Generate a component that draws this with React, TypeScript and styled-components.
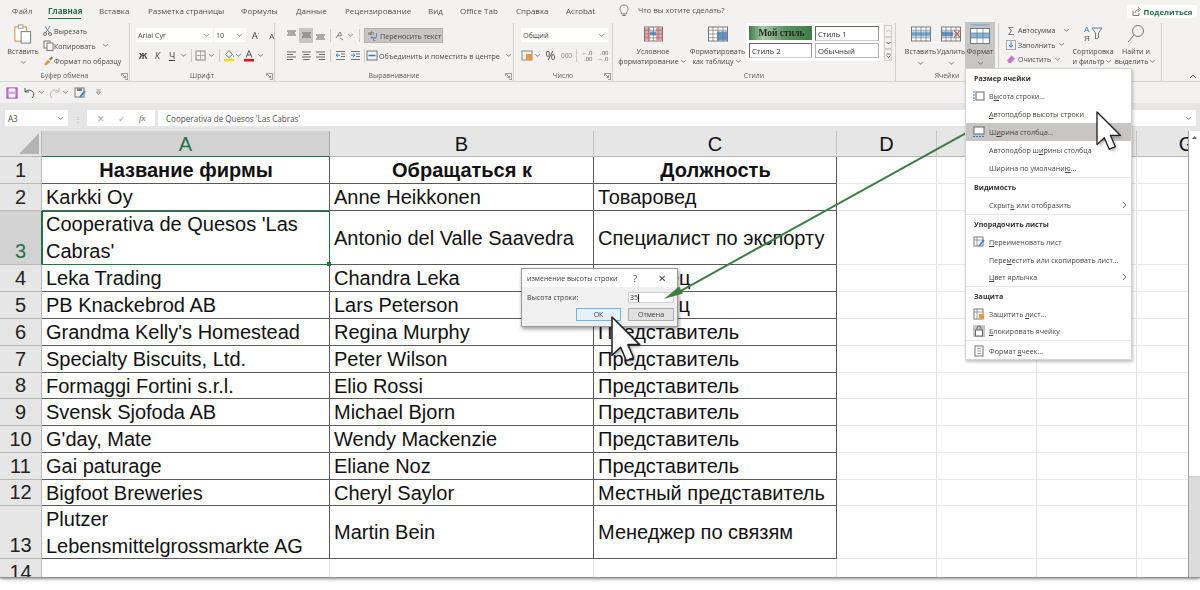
import React from "react";
import styled, { createGlobalStyle } from "styled-components";

const Global = createGlobalStyle`
  html, body { margin: 0; padding: 0; background: #fff; }
  #root { width: 1200px; height: 590px; overflow: hidden; }
`;

const UI = `"Open Sans", "Noto Sans", sans-serif`;
const Page = styled.div`position: relative; width: 1200px; height: 590px; background: #fff; overflow: hidden; font-family: ${UI};`;
const Shell = styled.div`display: flex; flex-direction: column; height: 578px; padding-top: 2px; box-sizing: border-box; background: #f3f2f1; border-bottom: 1px solid #8f8f8f; box-shadow: 0 1px 3px rgba(0,0,0,.45); overflow: hidden;`;
const Soft = styled.div`filter: blur(0.3px); display: flex; flex-direction: column;`;

const TabBar = styled.div`display: flex; align-items: center; height: 18px; padding: 0 0 2px 12px; box-sizing: border-box; position: relative;`;
const Tab = styled.div<{ $w: number; $active?: boolean }>`
  width: ${p => p.$w}px; flex: none; font-size: 8px; white-space: nowrap; color: ${p => p.$active ? "#2b6a44" : "#505050"}; font-weight: ${p => p.$active ? 700 : 400}; position: relative;
  ${p => p.$active ? `&::after{content:"";position:absolute;left:0;top:13px;width:33px;height:1.5px;background:#217346;}` : ""}
`;
const Hint = styled.div`margin-left: 9px; font-size: 7.6px; color: #505050; white-space: nowrap;`;
const Share = styled.div`position: absolute; left: 1127px; top: 3px; width: 70px; height: 13px; background: #fff; border-radius: 2px; display: flex; align-items: center; justify-content: center; gap: 3px; font-size: 7.8px; font-weight: 700; color: #217346;`;

const Ribbon = styled.div`display: flex; height: 62px; padding-top: 3px; box-sizing: border-box; border-bottom: 1px solid #d4d4d4; position: relative;`;
const Group = styled.div<{ $w: number }>`position: relative; width: ${p => p.$w}px; flex: none; height: 58px; box-sizing: border-box; border-right: 1px solid #d2d0ce; display: flex; flex-direction: column;`;
const GroupBody = styled.div<{ $pl?: number; $gap?: number }>`flex: 1; display: flex; padding-left: ${p => p.$pl ?? 0}px; gap: ${p => p.$gap ?? 0}px; min-height: 0;`;
const GroupLabel = styled.div`height: 10px; line-height: 10px; font-size: 6.9px; color: #5c5c5c; text-align: center;`;
const Launcher = styled.svg`position: absolute; right: 1px; bottom: 1px; width: 7px; height: 7px;`;
const Collapse = styled.svg`position: absolute; left: 1189px; top: 54px; width: 8px; height: 5px;`;
const BigBtn = styled.div<{ $w: number; $on?: boolean; $pl?: number }>`
  width: ${p => p.$w}px; flex: none; box-sizing: border-box; padding-left: ${p => p.$pl ?? 0}px; height: 46px; margin-top: ${p => p.$on ? -1 : 0}px; position: relative; z-index: 1; display: flex; flex-direction: column; align-items: center; font-size: 7.1px; line-height: 10px; color: #484848; white-space: nowrap;
  background: ${p => p.$on ? "#c8c6c4" : "transparent"};
  svg.main { margin-top: ${p => p.$on ? 2 : 1}px; margin-bottom: 2px; height: 20px; }
`;
const Caret = styled.span`display: inline-block; width: 4px; height: 4px; border-right: 1px solid #777; border-bottom: 1px solid #777; transform: scale(.75,.6) rotate(45deg); flex: none; margin: 0 2px 2px;`;
const Col = styled.div<{ $w?: number; $gap?: number; $pt?: number }>`display: flex; flex-direction: column; width: ${p => p.$w ? p.$w + "px" : "auto"}; gap: ${p => p.$gap ?? 0}px; padding-top: ${p => p.$pt ?? 0}px; flex: none;`;
const Line = styled.div<{ $h?: number; $gap?: number }>`display: flex; align-items: center; height: ${p => p.$h ?? 14}px; gap: ${p => p.$gap ?? 0}px; font-size: 7.1px; color: #484848; white-space: nowrap;`;
const Select = styled.div<{ $w: number }>`width: ${p => p.$w}px; height: 14px; box-sizing: border-box; background: #fff; font-size: 7.2px; color: #444; padding: 0 2px; display: flex; align-items: center; justify-content: space-between; flex: none;`;
const Sep = styled.span<{ $mx?: number }>`width: 1px; height: 13px; background: #cfcdcb; margin: 0 ${p => p.$mx ?? 4}px; flex: none;`;
const Boxed = styled.span<{ $w?: number; $on?: boolean }>`display: flex; align-items: center; justify-content: center; flex: none; width: ${p => p.$w ?? 15}px; height: 15px; background: ${p => p.$on ? "#c8c6c4" : "transparent"}; font-size: 9.5px; color: #444;`;
const WrapBtn = styled.div`width: 79px; height: 15px; background: #c8c6c4; border: 1px solid #b5b3b1; display: flex; align-items: center; gap: 2px; padding-left: 2px; box-sizing: border-box; font-size: 7.1px; color: #444; white-space: nowrap;`;

const Gallery = styled.div`display: grid; grid-template-columns: 63px 64px; grid-auto-rows: 16px; gap: 1px 3px; background: #fff; padding: 3px 2px 2px 3px; height: 33px; width: 132px; box-sizing: content-box; flex: none;`;
const StyleCell = styled.div<{ $kind: "green" | "box" | "normal" }>`
  height: ${p => p.$kind === "green" ? 14 : 15}px; box-sizing: border-box; display: flex; align-items: center; padding-left: 2px; font-size: 7.7px; color: #333; white-space: nowrap; overflow: hidden;
  ${p => p.$kind === "green" ? `background: linear-gradient(90deg,#3f7d45 0,#a6caa6 22%,#5e9463 55%,#3f7d45 100%); font-family:"Liberation Serif",serif; font-weight:700; justify-content:center; color:#2a2a20; font-size:9.5px;` : ""}
  ${p => p.$kind === "box" ? `border: 1px solid #666; border-bottom-color:#ccc; border-right-color:#999;` : ""}
  ${p => p.$kind === "normal" ? `border: 1.5px solid #b4b4b4;` : ""}
`;
const GalleryScroll = styled.div`display: flex; flex-direction: column; width: 8px; margin: 2px 0 0 1px; flex: none;`;
const GalleryBtn = styled.div`flex: none; height: 12px; border: 1px solid #d2d0ce; background: #f3f2f1; box-sizing: border-box; display:flex; align-items:center; justify-content:center;`;

const Qat = styled.div`display: flex; align-items: center; height: 21px; padding-left: 6px;`;
const QatGap = styled.span<{ $w: number }>`width: ${p => p.$w}px; flex: none;`;
const Band = styled.div`height: 5px; background: #e6e6e6;`;
const FormulaBar = styled.div`display: flex; align-items: stretch; height: 18px; background: #e6e6e6; padding: 2px 4px 0 5px; box-sizing: border-box; font-size: 8.1px; color: #505050;`;
const FBox = styled.div<{ $w?: number; $grow?: boolean }>`background: #fff; ${p => p.$w ? `width:${p.$w}px;flex:none;` : ""} ${p => p.$grow ? "flex:1;padding-left:8px !important;" : ""} display: flex; align-items: center; padding: 0 3px; box-sizing: border-box; justify-content: space-between;`;
const Grip = styled.div`width: 19px; flex: none; display: flex; align-items: center; justify-content: center; color: #aaa; font-size: 8px;`;
const BarGap = styled.span`width: 3px; flex: none;`;
const FxIcons = styled.div`display: flex; flex: 1; justify-content: space-around; align-items: center; color: #aaa; font-size: 9px;`;
const Fx = styled.i`font-family: "Liberation Serif", serif; color: #555;`;

const SheetArea = styled.div`flex: 1; display: flex; min-height: 0; background: #e6e6e6; padding-top: 5px;`;
const SheetGrid = styled.div`
  flex: 1; overflow: hidden; display: grid; align-content: start; background: #fff;
  grid-template-columns: 42px 288px 264px 243px 100px 100px 100px 100px;
  grid-template-rows: 26px 27px 27px 54px 27px 27px 27px 27px 26px 27px 27px 27px 26px 53px 27px;
  font-family: "Liberation Sans", Arial, sans-serif; font-size: 20px; color: #111;
`;
const Corner = styled.div`background: #e6e6e6; border-right: 1px solid #b8b8b8; border-bottom: 1px solid #b8b8b8; display: flex; align-items: flex-end; justify-content: flex-end; padding: 0 2px 2px 0; box-sizing: border-box;`;
const ColHead = styled.div<{ $on?: boolean }>`background: ${p => p.$on ? "#d2d2d2" : "#e6e6e6"}; color: ${p => p.$on ? "#217346" : "#111"}; border-right: 1px solid ${p => p.$on ? "#a8a8a8" : "#c6c6c6"}; border-bottom: 1px solid ${p => p.$on ? "#217346" : "#b8b8b8"}; display: flex; align-items: center; justify-content: center; box-sizing: border-box; padding-top: 1px;`;
const RowHead = styled.div<{ $on?: boolean }>`background: ${p => p.$on ? "#d2d2d2" : "#e6e6e6"}; color: ${p => p.$on ? "#217346" : "#222"}; border-right: 1px solid ${p => p.$on ? "#217346" : "#b8b8b8"}; border-bottom: 1px solid #b8b8b8; display: flex; align-items: flex-end; justify-content: center; box-sizing: border-box; line-height: 25px;`;
const Cell = styled.div<{ $boxed?: boolean; $head?: boolean; $sel?: boolean }>`
  box-sizing: border-box; display: flex; align-items: center; padding: 1px 3px 0 4px; position: relative; line-height: 27px; white-space: pre-line;
  border-right: 1px solid ${p => p.$boxed ? "#5a5a5a" : "#e3e3e3"}; border-bottom: 1px solid ${p => p.$boxed ? "#5a5a5a" : "#e8e8e8"};
  ${p => p.$head ? "font-weight:700;justify-content:center;" : ""}
  ${p => p.$sel ? `outline: 1.5px solid #217346; outline-offset: -1px; z-index:1; &::after{content:"";position:absolute;right:-2px;bottom:-2px;width:4px;height:4px;background:#217346;}` : ""}
`;
const Scrollbar = styled.div`width: 12px; flex: none; box-sizing: border-box; border-left: 1px solid #9c9c9c; display: flex; flex-direction: column; background: #dcdcdc;`;
const Thumb = styled.div`height: 346px; background: #fff; border-bottom: 1px solid #cfcfcf; display: flex; justify-content: center; padding-top: 4px; box-sizing: border-box;`;

const Menu = styled.div`position: absolute; left: 965px; top: 68px; width: 167px; height: 292px; box-sizing: border-box; background: #fff; border: 1px solid #d4d4d4; box-shadow: 1px 2px 3px rgba(0,0,0,.25); display: flex; flex-direction: column; font-size: 7.1px; color: #444; filter: blur(0.25px); z-index: 5;`;
const MenuHead = styled.div`height: 18px; flex: none; font-weight: 700; color: #333; padding-left: 8px; display: flex; align-items: center;`;
const MenuItem = styled.div<{ $on?: boolean; $h?: number }>`height: ${p => p.$h ?? 18}px; flex: none; display: flex; align-items: center; position: relative; padding-left: 23px; white-space: nowrap; background: ${p => p.$on ? "#c8c6c4" : "transparent"}; svg.ic { position: absolute; left: 7px; top: 50%; transform: translateY(-50%); } svg.more { position: absolute; right: 4px; top: 50%; transform: translateY(-50%); }`;
const MenuText = styled.span`white-space: pre;`;
const MenuSep = styled.div`height: 1px; flex: none; background: #e6e6e6;`;
const Key = styled.span`text-decoration: underline; text-underline-offset: 1px;`;

const Dialog = styled.div`position: absolute; left: 521px; top: 268px; width: 157px; height: 59px; box-sizing: border-box; background: #f0f0f0; border: 1px solid #9a9a9a; box-shadow: 1px 2px 4px rgba(0,0,0,.4); display: flex; flex-direction: column; font-size: 7px; color: #3c3c3c; filter: blur(0.25px); z-index: 3;`;
const DialogTitle = styled.div`height: 18px; flex: none; background: #fff; display: flex; align-items: center; padding: 0 5px; position: relative; white-space: nowrap;`;
const DialogControls = styled.span`position: absolute; left: 111px; display: flex; gap: 21px; font-size: 9.5px; color: #444;`;
const DialogRow = styled.div`display: flex; align-items: center; justify-content: space-between; padding: 5px 3px 0 5px;`;
const DialogInput = styled.div`width: 46px; height: 11px; box-sizing: border-box; background: #fff; border: 1px solid #ccc; line-height: 9px; padding-left: 1px; font-size: 7px; color: #222; &::after { content: ""; display: inline-block; width: 1px; height: 8px; background: #222; vertical-align: middle; }`;
const DialogBtns = styled.div`display: flex; justify-content: flex-end; gap: 7px; padding: 5px 3px 0 0;`;
const DialogBtn = styled.div<{ $primary?: boolean }>`width: ${p => p.$primary ? 45 : 46}px; height: 13px; box-sizing: border-box; text-align: center; line-height: 11px; background: ${p => p.$primary ? "#e5f1fb" : "#e1e1e1"}; border: 1px solid ${p => p.$primary ? "#6db5ea" : "#adadad"};`;

const Overlay = styled.svg`position: absolute; left: 0; top: 0; width: 1200px; height: 590px; pointer-events: none; z-index: 4;`;
const CursorLayer = styled(Overlay)`z-index: 6; overflow: visible;`;

type IP = { w?: number; h?: number; vb?: string; className?: string; children?: React.ReactNode };
const I = ({ w = 12, h = 12, vb, className, children }: IP) => (
  <svg className={className} width={w} height={h} viewBox={vb ?? `0 0 ${w} ${h}`} fill="none" style={{ flex: "none", display: "block" }}>{children}</svg>
);

const LauncherIcon = () => (
  <Launcher viewBox="0 0 7 7" fill="none"><path d="M.5 3V.5H6.5V6.5H4" stroke="#777" strokeWidth=".7" /><path d="M1 1l3.5 3.5M4.5 2.5v2h-2" stroke="#666" strokeWidth=".7" /></Launcher>
);
const Grid3 = ({ w = 24, h = 15, c = "#777", fill }: { w?: number; h?: number; c?: string; fill?: React.ReactNode }) => (
  <I w={w} h={h} className="main">
    <rect x=".5" y=".5" width={w - 1} height={h - 1} fill="#fff" stroke={c} />
    {fill}
    {[1, 2, 3].map(i => <path key={i} d={`M.5 ${(i * h) / 4}H${w - .5}`} stroke={c} strokeWidth=".7" />)}
    {[1, 2, 3].map(i => <path key={i} d={`M${(i * w) / 4} .5V${h - .5}`} stroke={c} strokeWidth=".7" />)}
  </I>
);
const AlignIcon = ({ kind }: { kind: "l" | "c" | "r" | "t" | "m" | "b" }) => {
  if (kind === "t" || kind === "m" || kind === "b") {
    const y = kind === "t" ? 1 : kind === "m" ? 3 : 5;
    return <I w={11} h={11}><path d={`M1 ${y}H10M2 ${y + 2}H9M1 ${y + 4}H10`} stroke="#666" /></I>;
  }
  const d = kind === "l" ? "M1 2H10M1 4.5H7M1 7H10M1 9.5H7" : kind === "c" ? "M1 2H10M2.5 4.5H8.5M1 7H10M2.5 9.5H8.5" : "M1 2H10M4 4.5H10M1 7H10M4 9.5H10";
  return <I w={11} h={11}><path d={d} stroke="#666" /></I>;
};
const Indent = ({ rev }: { rev?: boolean }) => (
  <I w={11} h={11}><path d="M1 1.5H10M6 4H10M6 6.5H10M1 9.5H10" stroke="#777" /><path d={rev ? "M1 5.2H5M3 3.5L5 5.2 3 7" : "M5 5.2H1M3 3.5L1 5.2 3 7"} stroke="#2b7cd3" strokeWidth=".9" /></I>
);

const tabs: [string, number, boolean?][] = [["Файл", 36], ["Главная", 51, true], ["Вставка", 49], ["Разметка страницы", 93], ["Формулы", 55], ["Данные", 49], ["Рецензирование", 83], ["Вид", 32], ["Office Tab", 56], ["Справка", 50], ["Acrobat", 53]];

type Row = { n: number; a: string; b: string; c: string; head?: boolean; sel?: boolean };
const rows: Row[] = [
  { n: 1, a: "Название фирмы", b: "Обращаться к", c: "Должность", head: true },
  { n: 2, a: "Karkki Oy", b: "Anne Heikkonen", c: "Товаровед" },
  { n: 3, a: "Cooperativa de Quesos 'Las\nCabras'", b: "Antonio del Valle Saavedra", c: "Специалист по экспорту", sel: true },
  { n: 4, a: "Leka Trading", b: "Chandra Leka", c: "Владелец" },
  { n: 5, a: "PB Knackebrod AB", b: "Lars Peterson", c: "Продавец" },
  { n: 6, a: "Grandma Kelly's Homestead", b: "Regina Murphy", c: "Представитель" },
  { n: 7, a: "Specialty Biscuits, Ltd.", b: "Peter Wilson", c: "Представитель" },
  { n: 8, a: "Formaggi Fortini s.r.l.", b: "Elio Rossi", c: "Представитель" },
  { n: 9, a: "Svensk Sjofoda AB", b: "Michael Bjorn", c: "Представитель" },
  { n: 10, a: "G'day, Mate", b: "Wendy Mackenzie", c: "Представитель" },
  { n: 11, a: "Gai paturage", b: "Eliane Noz", c: "Представитель" },
  { n: 12, a: "Bigfoot Breweries", b: "Cheryl Saylor", c: "Местный представитель" },
  { n: 13, a: "Plutzer\nLebensmittelgrossmarkte AG", b: "Martin Bein", c: "Менеджер по связям" },
];

const cursor = (x: number, y: number, s: number) => (
  <g transform={`translate(${x} ${y}) scale(${s})`}>
    <path d="M0 0V32L7.2 25.2 12 36.5 18 34 13.2 23H23Z" fill="#000" opacity=".3" transform="translate(2 2)" style={{ filter: "blur(1.5px)" }} />
    <path d="M0 0V32L7.2 25.2 12 36.5 18 34 13.2 23H23Z" fill="#fff" stroke="#222" strokeWidth="1.3" strokeLinejoin="round" />
  </g>
);

export default function App() {
  return (
    <Page>
      <Global />
      <Shell>
        <Soft>
          <TabBar>
            {tabs.map(([t, w, a]) => <Tab key={t} $w={w} $active={a}>{t}</Tab>)}
            <I w={10} h={13} vb="0 0 10 13"><path d="M2.5 8.5C1 7 .8 5.5 1 4.2 1.4 2 3 1 5 1s3.6 1 4 3.2c.2 1.3 0 2.8-1.5 4.3V10h-5Z" stroke="#666" strokeWidth=".8" /><path d="M3.5 11.5h3" stroke="#666" /></I>
            <Hint>Что вы хотите сделать?</Hint>
            <Share>
              <I w={9} h={9}><path d="M1 3.5V8.5H7V6M3 6C3.5 3.5 5 2.5 7 2.5M6 .5L8.5 2.5 6 4.5" stroke="#555" strokeWidth=".8" /></I>
              Поделиться
            </Share>
          </TabBar>
          <Ribbon>
            <Group $w={130}>
              <GroupBody>
                <BigBtn $w={43} $pl={3}>
                  <I w={20} h={21} className="main"><rect x="1.5" y="3" width="12" height="15" fill="#fff" stroke="#d08a3c" /><rect x="5" y="1" width="5" height="3.5" fill="#fff" stroke="#999" /><rect x="8" y="8" width="10" height="12" fill="#fff" stroke="#777" /></I>
                  <span>Вставить</span>
                  <Caret style={{ marginTop: 3 }} />
                </BigBtn>
                <Col>
                  <Line $h={15} $gap={2}><I w={9} h={11}><path d="M2 1L6.5 8M7 1L2.5 8" stroke="#6a8db5" /><circle cx="2" cy="9" r="1.5" stroke="#555" strokeWidth=".8" /><circle cx="7" cy="9" r="1.5" stroke="#555" strokeWidth=".8" /></I>Вырезать</Line>
                  <Line $h={15}><I w={11} h={11}><rect x="1" y="1" width="6" height="7" stroke="#777" fill="#fff" /><rect x="4" y="3" width="6" height="7.5" stroke="#777" fill="#fff" /></I>Копировать<Caret style={{ marginLeft: 7 }} /></Line>
                  <Line $h={15}><I w={11} h={11}><path d="M1 9.5L5 4.5 7.5 7 3 10.5Z" fill="#e59a3f" /><path d="M6 4L8.5 1.5 10 3 7.5 5.5" fill="#777" /></I>Формат по образцу</Line>
                </Col>
              </GroupBody>
              <GroupLabel>Буфер обмена</GroupLabel>
              <LauncherIcon />
            </Group>
            <Group $w={145}>
              <GroupBody $pl={6}>
                <Col $pt={5} $gap={6}>
                  <Line $gap={1}>
                    <Select $w={77}>Arial Cyr<Caret /></Select>
                    <Select $w={32}>10<Caret /></Select>
                    <Boxed $w={17}>A<span style={{ fontSize: 5, color: "#2b7cd3" }}>˄</span></Boxed>
                    <Boxed $w={15} style={{ fontSize: 8 }}>A<span style={{ fontSize: 5, color: "#2b7cd3" }}>˅</span></Boxed>
                  </Line>
                  <Line $h={15}>
                    <Boxed $w={14} style={{ fontWeight: 700, fontFamily: "Liberation Sans" }}>Ж</Boxed>
                    <Boxed $w={15} style={{ fontStyle: "italic", fontSize: 9 }}>К</Boxed>
                    <Boxed $w={14} style={{ textDecoration: "underline", fontSize: 9 }}>Ч</Boxed>
                    <Caret />
                    <Sep $mx={3} />
                    <I w={11} h={11}><rect x="1" y="1" width="9" height="9" stroke="#888" /><path d="M5.5 1V10M1 5.5H10" stroke="#aaa" /></I>
                    <Caret style={{ marginLeft: 3 }} />
                    <Sep $mx={3} />
                    <I w={12} h={13}><path d="M6 1.5L9.5 5.5 6 8.5 2.5 5.5Z" stroke="#555" strokeWidth=".8" /><path d="M10 7a.8.8 0 0 0 1 0" stroke="#555" /><rect x="1" y="10" width="10" height="2.5" fill="#ffe000" /></I>
                    <Caret style={{ marginLeft: 1 }} />
                    <I w={12} h={13}><path d="M3 8.5L6 1.5 9 8.5M4 6H8" stroke="#555" /><rect x="1" y="10" width="10" height="2.5" fill="#e01010" /></I>
                    <Caret style={{ marginLeft: 3 }} />
                  </Line>
                </Col>
              </GroupBody>
              <GroupLabel>Шрифт</GroupLabel>
              <LauncherIcon />
            </Group>
            <Group $w={239}>
              <GroupBody $pl={9}>
                <Col $pt={5} $gap={5}>
                  <Line $h={15}>
                    <Boxed $w={15}><AlignIcon kind="t" /></Boxed>
                    <Boxed $w={14} $on><AlignIcon kind="m" /></Boxed>
                    <Boxed $w={15}><AlignIcon kind="b" /></Boxed>
                    <Sep $mx={2} />
                    <Boxed $w={13}><I w={11} h={11}><path d="M2 8L6 2 8 6M3.5 5.8H7M6 8L9 10" stroke="#666" strokeWidth=".8" /></I></Boxed>
                    <Caret />
                    <Sep $mx={4} />
                    <WrapBtn>
                      <I w={11} h={11}><text x="1" y="5" fontSize="5.5" fill="#555" fontFamily="Liberation Sans">ab</text><text x="6" y="10.5" fontSize="5.5" fill="#555" fontFamily="Liberation Sans">c</text><path d="M9.5 3V7.5H4M5.5 6L4 7.5 5.500 9" stroke="#2b7cd3" strokeWidth=".7" /></I>
                      Переносить текст
                    </WrapBtn>
                  </Line>
                  <Line $h={15}>
                    <Boxed $w={15}><AlignIcon kind="l" /></Boxed>
                    <Boxed $w={14}><AlignIcon kind="c" /></Boxed>
                    <Boxed $w={15}><AlignIcon kind="r" /></Boxed>
                    <Sep $mx={2} />
                    <Boxed $w={15}><Indent /></Boxed>
                    <Boxed $w={15}><Indent rev /></Boxed>
                    <Sep $mx={1} />
                    <I w={12} h={11}><rect x="1" y="1" width="10" height="9" stroke="#777" /><path d="M2.5 5.5H9.5" stroke="#2b7cd3" strokeWidth="1.5" /></I>
                    <QatGap $w={1} />
                    Объединить и поместить в центре
                    <Caret style={{ marginLeft: 6 }} />
                  </Line>
                </Col>
              </GroupBody>
              <GroupLabel>Выравнивание</GroupLabel>
              <LauncherIcon />
            </Group>
            <Group $w={99}>
              <GroupBody $pl={7}>
                <Col $pt={5} $gap={6}>
                  <Select $w={87}>Общий<Caret /></Select>
                  <Line $h={15}>
                    <I w={12} h={11}><rect x="1" y="1" width="10" height="9" stroke="#888" /><rect x="5" y="4" width="6" height="6" fill="#e59a3f" /></I>
                    <Caret />
                    <Boxed $w={17} style={{ fontSize: 12 }}>%</Boxed>
                    <Boxed $w={15} style={{ fontSize: 6.5, color: "#888" }}>000</Boxed>
                    <Sep $mx={2} />
                    <Boxed $w={16} style={{ fontSize: 6, lineHeight: "6px", textAlign: "right", color: "#555" }}>←.0<br />.00</Boxed>
                    <Boxed $w={16} style={{ fontSize: 6, lineHeight: "6px", textAlign: "right", color: "#555" }}>.00<br />→.0</Boxed>
                  </Line>
                </Col>
              </GroupBody>
              <GroupLabel>Число</GroupLabel>
              <LauncherIcon />
            </Group>
            <Group $w={283}>
              <GroupBody $pl={4}>
                <BigBtn $w={72}>
                  <Grid3 w={19} h={15} fill={<><rect x="1" y="1" width="5" height="13" fill="#f4a0a0" /><rect x="12" y="1" width="6" height="13" fill="#f4a0a0" /><rect x="6" y="5" width="6" height="4" fill="#5b9bd5" /></>} />
                  <span>Условное</span>
                  <Line $h={10}>форматирование<Caret /></Line>
                </BigBtn>
                <BigBtn $w={57}>
                  <Grid3 w={20} h={15} fill={<rect x="9" y="5" width="10" height="9" fill="#5b9bd5" />} />
                  <span>Форматировать</span>
                  <Line $h={10}>как таблицу<Caret /></Line>
                </BigBtn>
                <Gallery>
                  <StyleCell $kind="green">Мой стиль</StyleCell>
                  <StyleCell $kind="box">Стиль 1</StyleCell>
                  <StyleCell $kind="box">Стиль 2</StyleCell>
                  <StyleCell $kind="normal">Обычный</StyleCell>
                </Gallery>
                <GalleryScroll>
                  <GalleryBtn><I w={5} h={4}><path d="M.5 3L2.5 1 4.5 3" stroke="#bbb" /></I></GalleryBtn>
                  <GalleryBtn><I w={5} h={4}><path d="M.5 1L2.5 3 4.5 1" stroke="#555" /></I></GalleryBtn>
                  <GalleryBtn><I w={5} h={5}><path d="M.5 1H4.5M.5 2.5L2.5 4.5 4.5 2.5" stroke="#555" strokeWidth=".8" /></I></GalleryBtn>
                </GalleryScroll>
              </GroupBody>
              <GroupLabel>Стили</GroupLabel>
            </Group>
            <Group $w={103}>
              <GroupBody $pl={8}>
                <BigBtn $w={33}>
                  <Grid3 w={20} h={15} fill={<path d="M1 5H19V10H1Z" fill="#7ab8e8" />} />
                  <span>Вставить</span>
                  <Caret style={{ marginTop: 4 }} />
                </BigBtn>
                <BigBtn $w={28}>
                  <Grid3 w={20} h={15} fill={<><path d="M1 5H12V10H1Z" fill="#5b9bd5" /><path d="M13 4L19 11M19 4L13 11" stroke="#e0605a" strokeWidth="1.2" /></>} />
                  <span>Удалить</span>
                  <Caret style={{ marginTop: 4 }} />
                </BigBtn>
                <BigBtn $w={30} $on>
                  <I w={20} h={20} className="main">
                    <path d="M1 1H19" stroke="#5b9bd5" />
                    <rect x=".5" y="4.5" width="19" height="15" fill="#fff" stroke="#777" />
                    <path d="M1 9H19V14H1Z" fill="#7ab8e8" />
                    <path d="M1 9H19M1 14H19M7 5V19M13 5V19" stroke="#777" strokeWidth=".7" />
                  </I>
                  <span>Формат</span>
                  <Caret style={{ marginTop: 4 }} />
                </BigBtn>
              </GroupBody>
              <GroupLabel>Ячейки</GroupLabel>
            </Group>
            <Group $w={163}>
              <GroupBody $pl={7}>
                <Col $w={65}>
                  <Line $h={14.5} $gap={2}><Boxed $w={10} style={{ fontSize: 11, height: 12, color: "#666" }}>Σ</Boxed>Автосумма<Caret style={{ marginLeft: 7 }} /></Line>
                  <Line $h={14.5} $gap={2}><I w={10} h={10}><rect x=".5" y=".5" width="9" height="9" stroke="#aaa" /><path d="M5 1.5V7M3 5L5 7.5 7 5" stroke="#2b7cd3" /></I>Заполнить<Caret /></Line>
                  <Line $h={14.5} $gap={2}><I w={10} h={10}><path d="M1 6.5L5.5 1.5 9 4.5 5 9H3Z" fill="#c774cc" /></I>Очистить<Caret /></Line>
                </Col>
                <BigBtn $w={44}>
                  <I w={20} h={20} className="main"><text x="1" y="8" fontSize="8" fill="#2b7cd3" fontFamily="Liberation Sans">А</text><text x="1" y="17" fontSize="8" fill="#555" fontFamily="Liberation Sans">Я</text><path d="M9 4H19L15.5 9V14L12.5 15V9Z" stroke="#777" /></I>
                  <span>Сортировка</span>
                  <Line $h={10}>и фильтр<Caret /></Line>
                </BigBtn>
                <BigBtn $w={42}>
                  <I w={20} h={20} className="main"><circle cx="12" cy="7" r="5.5" stroke="#777" /><path d="M8 11L2 18" stroke="#777" /></I>
                  <span>Найти и</span>
                  <Line $h={10}>выделить<Caret /></Line>
                </BigBtn>
              </GroupBody>
              <GroupLabel />
            </Group>
            <Collapse viewBox="0 0 8 5" fill="none"><path d="M1 4L4 1 7 4" stroke="#666" /></Collapse>
          </Ribbon>
          <Qat>
            <I w={12} h={12}><rect x="1" y="1" width="10" height="10" stroke="#a14dbb" fill="#d5a6e0" strokeWidth="1.2" /><rect x="3" y="1.5" width="6" height="3" fill="#fff" /><rect x="3" y="7" width="6" height="3.5" fill="#fff" /></I>
            <QatGap $w={5} />
            <I w={14} h={12} vb="0 0 14 12"><path d="M2 1V5H6M2 5C4 2.5 8 2.5 10 5 11.5 7 10.5 9.5 9 11" stroke="#555" strokeWidth="1" /></I>
            <Caret />
            <QatGap $w={1} />
            <I w={14} h={12} vb="0 0 14 12"><path d="M12 1V5H8M12 5C10 2.5 6 2.5 4 5 2.5 7 3.5 9.5 5 11" stroke="#bbb" strokeWidth="1" /></I>
            <Caret />
            <QatGap $w={4} />
            <I w={13} h={12} vb="0 0 13 12"><rect x="1" y="1" width="9" height="9" stroke="#777" /><rect x="3" y="1.5" width="5" height="2.5" fill="#777" /><path d="M6 10L11 4" stroke="#2b7cd3" strokeWidth="1.8" /></I>
            <QatGap $w={8} />
            <I w={7} h={7}><path d="M1.5 1H5.5M1.5 3L3.5 5.5 5.5 3Z" stroke="#777" strokeWidth=".8" /></I>
          </Qat>
          <Band />
          <FormulaBar>
            <FBox $w={63}>A3<Caret /></FBox>
            <Grip>⋮</Grip>
            <FBox $w={68}><FxIcons><span>✕</span><span>✓</span><Fx>fx</Fx></FxIcons></FBox>
            <BarGap />
            <FBox $grow>Cooperativa de Quesos 'Las Cabras'<Caret /></FBox>
          </FormulaBar>
        </Soft>
        <SheetArea>
          <SheetGrid>
            <Corner><I w={20} h={21}><path d="M20 0V21H0Z" fill="#b4b4b4" /></I></Corner>
            {["A", "B", "C", "D", "E", "F", "G"].map((c, i) => <ColHead key={c} $on={i === 0}>{i > 3 && i < 6 ? "" : c}</ColHead>)}
            {rows.map(r => (
              <React.Fragment key={r.n}>
                <RowHead $on={r.sel}>{r.n}</RowHead>
                <Cell $boxed $head={r.head} $sel={r.sel}>{r.a}</Cell>
                <Cell $boxed $head={r.head}>{r.b}</Cell>
                <Cell $boxed $head={r.head}>{r.c}</Cell>
                <Cell /><Cell /><Cell /><Cell />
              </React.Fragment>
            ))}
            <RowHead>14</RowHead>
            <Cell /><Cell /><Cell /><Cell /><Cell /><Cell /><Cell />
          </SheetGrid>
          <Scrollbar>
            <Thumb><I w={7} h={5}><path d="M1 4L3.5 1 6 4Z" fill="#666" /></I></Thumb>
          </Scrollbar>
        </SheetArea>
      </Shell>

      <Dialog>
        <DialogTitle>изменение высоты строки<DialogControls><span>?</span><span>✕</span></DialogControls></DialogTitle>
        <DialogRow><span>Высота строки:</span><DialogInput>35</DialogInput></DialogRow>
        <DialogBtns><DialogBtn $primary>ОК</DialogBtn><DialogBtn>Отмена</DialogBtn></DialogBtns>
      </Dialog>

      <Overlay viewBox="0 0 1200 590">
        <path d="M966 133L675 294" stroke="#3f7b47" strokeWidth="2" />
        <path d="M664 299L679 286.5 683 293.5Z" fill="#3f7b47" />
      </Overlay>

      <Menu>
        <MenuHead>Размер ячейки</MenuHead>
        <MenuItem><I w={12} h={12} className="ic"><rect x="3" y="2" width="8" height="8" stroke="#666" /><path d="M1 1V11" stroke="#2b7cd3" strokeDasharray="2 1" /></I><MenuText>В<Key>ы</Key>сота строки...</MenuText></MenuItem>
        <MenuItem><MenuText><Key>А</Key>втоподбор высоты строки</MenuText></MenuItem>
        <MenuItem $on><I w={12} h={12} className="ic"><rect x="1" y="1" width="10" height="7" stroke="#666" fill="#fff" /><path d="M0 10.5H12" stroke="#2b7cd3" strokeDasharray="2 1" /></I><MenuText>Ш<Key>и</Key>рина столбца...</MenuText></MenuItem>
        <MenuItem><MenuText>Автоподбор ш<Key>и</Key>рины столбца</MenuText></MenuItem>
        <MenuItem><MenuText>Ширина по умолчани<Key>ю</Key>...</MenuText></MenuItem>
        <MenuSep />
        <MenuHead>Видимость</MenuHead>
        <MenuItem><MenuText>Скрыт<Key>ь</Key> или отобразить</MenuText><I w={5} h={8} className="more"><path d="M1 1L4 4 1 7" stroke="#666" /></I></MenuItem>
        <MenuSep />
        <MenuHead>Упорядочить листы</MenuHead>
        <MenuItem><I w={12} h={12} className="ic"><rect x="1" y="1" width="9" height="9" stroke="#777" /><path d="M1 4H10M4 1V10" stroke="#777" strokeWidth=".7" /><path d="M6 10L11 4" stroke="#2b7cd3" strokeWidth="1.6" /></I><MenuText><Key>П</Key>ереименовать лист</MenuText></MenuItem>
        <MenuItem $h={17.5}><MenuText>Пере<Key>м</Key>естить или скопировать лист...</MenuText></MenuItem>
        <MenuItem $h={17.5}><MenuText><Key>Ц</Key>вет ярлычка</MenuText><I w={5} h={8} className="more"><path d="M1 1L4 4 1 7" stroke="#666" /></I></MenuItem>
        <MenuSep />
        <MenuHead>Защита</MenuHead>
        <MenuItem $h={17.5}><I w={12} h={12} className="ic"><rect x="1" y="1" width="9" height="10" stroke="#777" /><path d="M1 4H10M4 1V11" stroke="#777" strokeWidth=".7" /><rect x="6" y="6" width="5" height="5" fill="#e59a3f" /></I><MenuText>Защитить <Key>л</Key>ист...</MenuText></MenuItem>
        <MenuItem $h={17.5}><I w={12} h={12} className="ic"><rect x="0" y="0" width="12" height="12" fill="#c8c6c4" /><rect x="2.5" y="5" width="7" height="6" fill="#fff" stroke="#666" /><path d="M4 5V3a2 2 0 0 1 4 0V5" stroke="#666" /></I><MenuText><Key>Б</Key>локировать ячейку</MenuText></MenuItem>
        <MenuSep />
        <MenuItem $h={19}><I w={12} h={12} className="ic"><rect x="2" y="1" width="8" height="10" stroke="#777" /><path d="M4 3.5H8M4 6H8M4 8.5H8" stroke="#777" strokeWidth=".7" /></I><MenuText>Формат <Key>я</Key>чеек...</MenuText></MenuItem>
      </Menu>

      <CursorLayer viewBox="0 0 1200 590">
        {cursor(1097, 112, 1.02)}
        {cursor(612, 317, 1.2)}
      </CursorLayer>
    </Page>
  );
}
